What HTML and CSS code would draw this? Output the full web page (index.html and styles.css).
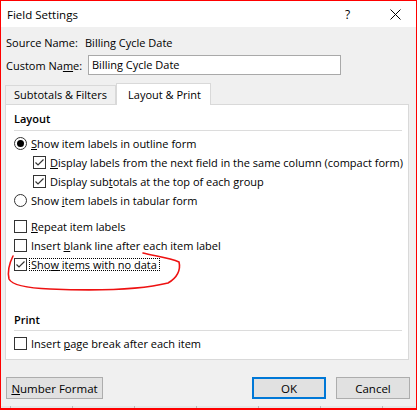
FILE: index.html
```html
<!DOCTYPE html>
<html>
<head>
<meta charset="utf-8">
<link rel="stylesheet" href="styles.css">
</head>
<body>
<div class="window">
  <div class="titlebar">
    <span class="title">Field Settings</span>
    <span class="help">?</span>
    <span class="close"><svg width="11" height="11" viewBox="0 0 11 11"><path d="M0.5 0.5 L10.5 10.5 M10.5 0.5 L0.5 10.5" stroke="#000" stroke-width="1" fill="none"/></svg></span>
  </div>
  <div class="body">
    <div class="row source"><span class="lbl">Source Name:</span><span class="val">Billing Cycle Date</span></div>
    <div class="row custom"><span class="lbl">Custom Na<u>m</u>e:</span><div class="input">Billing Cycle Date</div></div>
    <div class="tabs">
      <div class="tab">Subtotals &amp; Filters</div>
      <div class="tab active">Layout &amp; Print</div>
    </div>
    <div class="panel">
      <div class="section-title">Layout</div>
      <div class="sep"></div>
      <div class="opt"><span class="radio on"></span><span class="text"><u>S</u>how item labels in outline form</span></div>
      <div class="opt nested"><span class="check on"><svg viewBox="0 0 11 11"><polyline points="1.5,5.5 4,8 9.5,2.5" fill="none" stroke="#333" stroke-width="1.2"/></svg></span><span class="text"><u>D</u>isplay labels from the next field in the same column (compact form)</span></div>
      <div class="opt nested"><span class="check on"><svg viewBox="0 0 11 11"><polyline points="1.5,5.5 4,8 9.5,2.5" fill="none" stroke="#333" stroke-width="1.2"/></svg></span><span class="text">Display sub<u>t</u>otals at the top of each group</span></div>
      <div class="opt"><span class="radio"></span><span class="text">Show <u>i</u>tem labels in tabular form</span></div>
      <div class="group2">
        <div class="opt"><span class="check"></span><span class="text"><u>R</u>epeat item labels</span></div>
        <div class="opt"><span class="check"></span><span class="text">Insert <u>b</u>lank line after each item label</span></div>
        <div class="opt"><span class="check on"><svg viewBox="0 0 11 11"><polyline points="1.5,5.5 4,8 9.5,2.5" fill="none" stroke="#333" stroke-width="1.2"/></svg></span><span class="text focus">Sho<u>w</u> items with no data</span></div>
      </div>
      <div class="section-title print">Print</div>
      <div class="sep print-sep"></div>
      <div class="opt"><span class="check"></span><span class="text">Insert <u>p</u>age break after each item</span></div>
    </div>
    <div class="buttons">
      <button class="btn numfmt"><u>N</u>umber Format</button>
      <span class="spacer"></span>
      <button class="btn ok">OK</button>
      <button class="btn cancel">Cancel</button>
    </div>
  </div>
  <div class="strip"></div>
  <svg class="annot" width="418" height="410" viewBox="0 0 418 410"><path d="M143,253 C155,256 170,258 179,262 C181,270 177,278 168,283 C140,290 100,291 50,289 C25,288 12,285 9,279 C7,270 10,262 13,256" fill="none" stroke="#ee1111" stroke-width="1.6" stroke-linecap="round"/></svg>
</div>
</body>
</html>
```
FILE: styles.css
```css
* { box-sizing: border-box; }
html, body { margin: 0; padding: 0; background: #fff; }
body {
  font-family: "Open Sans", "Noto Sans", sans-serif;
  font-size: 11px;
  color: #000;
}
u { text-decoration: underline; text-underline-offset: 1px; }
.window {
  position: relative;
  width: 417px;
  height: 410px;
  border: 1px solid #f00;
  border-bottom: 2px solid #f00;
  background: #f0f0f0;
  display: flex;
  flex-direction: column;
  overflow: hidden;
}
.titlebar {
  height: 26px;
  background: #fff;
  display: flex;
  align-items: center;
  padding-left: 6px;
  flex: none;
}
.title { flex: 1; font-size: 11.5px; }
.help { width: 8px; margin-right: 37px; font-size: 12px; }
.close { width: 11px; margin-right: 15px; display: flex; }
.body {
  flex: 1;
  padding: 0 7px 0 4px;
  display: flex;
  flex-direction: column;
}
.row { display: flex; align-items: center; white-space: nowrap; }
.source { height: 22px; margin-top: 4px; padding-left: 1px; }
.source .lbl { width: 79px; flex: none; }
.custom { height: 20px; margin-top: 2px; padding-left: 1px; }
.custom .lbl { width: 82px; flex: none; }
.input {
  width: 253px;
  height: 20px;
  background: #fff;
  border: 1px solid #a9a9a9;
  padding-left: 3px;
  line-height: 17px;
}
.tabs {
  display: flex;
  align-items: flex-end;
  height: 21px;
  margin-top: 8px;
  position: relative;
  z-index: 1;
}
.tab {
  height: 19px;
  width: 111px;
  border: 1px solid #d9d9d9;
  border-bottom: none;
  text-align: center;
  line-height: 18px;
  background: #f0f0f0;
  white-space: nowrap;
}
.tab.active {
  width: 95px;
  height: 22px;
  margin-bottom: -1px;
  background: #fff;
  line-height: 21px;
  padding-left: 2px;
}
.panel {
  height: 256px;
  background: #fff;
  border: 1px solid #d9d9d9;
  padding: 4px 6px 0 8px;
  display: flex;
  flex-direction: column;
}
.section-title {
  font-weight: 600;
  height: 20px;
  line-height: 20px;
}
.section-title.print { margin-top: 36px; }
.sep {
  height: 1px;
  background: #dcdcdc;
  margin: 1px 0 3px;
}
.sep.print-sep { margin-top: 0; }
.opt {
  display: flex;
  align-items: center;
  height: 19px;
}
.opt.nested { padding-left: 19px; }
.group2 { margin-top: 7px; }
.text { margin-left: 4px; white-space: nowrap; }
.text.focus {
  margin-left: 2px;
  padding: 0 2px 0 1px;
  border: 1px dotted #000;
  line-height: 11px;
  height: 13px;
}
.radio {
  width: 13px;
  height: 13px;
  border: 1px solid #333;
  border-radius: 50%;
  background: #fff;
  display: flex;
  align-items: center;
  justify-content: center;
  flex: none;
}
.radio.on::after {
  content: "";
  width: 7px;
  height: 7px;
  border-radius: 50%;
  background: #000;
}
.check {
  width: 13px;
  height: 13px;
  border: 1px solid #333;
  background: #fff;
  flex: none;
  display: flex;
}
.check svg { width: 11px; height: 11px; }
.buttons {
  display: flex;
  margin-top: 17px;
  padding-left: 1px;
}
.spacer { flex: 1; }
.btn {
  font-family: inherit;
  font-size: 11.5px;
  color: #000;
  height: 22px;
  background: #e1e1e1;
  border: 1px solid #adadad;
  padding: 0;
  margin: 0;
}
.numfmt { width: 97px; }
.ok { width: 74px; border: 2px solid #0078d7; }
.cancel { width: 74px; margin-left: 10px; margin-right: -1px; }
.strip {
  height: 2px;
  flex: none;
  background: repeating-linear-gradient(90deg, #b8b8b8 0 1px, #e6e6e6 1px 62px);
  background-position: 9px 0;
}
.annot { position: absolute; left: -1px; top: -1px; pointer-events: none; }
```
